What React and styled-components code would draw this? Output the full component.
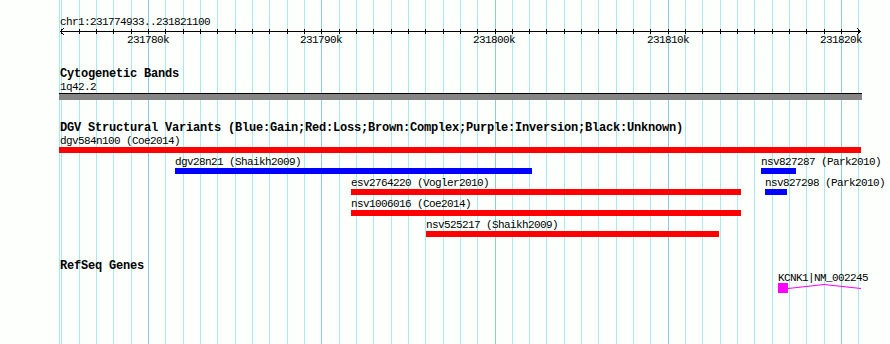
import React from 'react';
import styled, { createGlobalStyle } from 'styled-components';

const GlobalStyle = createGlobalStyle`
  html, body {
    margin: 0;
    padding: 0;
    background: #fcfffc;
  }
  #root {
    width: 890px;
    height: 344px;
  }
`;

// pixel scale of the view: 10k every 173.25px, 1k minor lines
const MAJOR_X = 148;
const STEP = 17.325;
const gridLines = [];
for (let k = -5; k <= 41; k++) {
  gridLines.push({ x: Math.round(MAJOR_X + k * STEP), major: k % 10 === 0 });
}

const tickLabels = [
  { x: 148, text: '231780k' },
  { x: 321, text: '231790k' },
  { x: 494, text: '231800k' },
  { x: 668, text: '231810k' },
  { x: 841, text: '231820k' },
];

const RED = '#ff0000';
const BLUE = '#0000ff';

const variantRows = [
  [{ name: 'dgv584n100 (Coe2014)', x: 59, x2: 861, labelX: 60, color: RED }],
  [
    { name: 'dgv28n21 (Shaikh2009)', x: 175, x2: 532, color: BLUE },
    { name: 'nsv827287 (Park2010)', x: 761, x2: 796, color: BLUE },
  ],
  [
    { name: 'esv2764220 (Vogler2010)', x: 351, x2: 741, color: RED },
    { name: 'nsv827298 (Park2010)', x: 765, x2: 787, color: BLUE },
  ],
  [{ name: 'nsv1006016 (Coe2014)', x: 351, x2: 741, color: RED }],
  [{ name: 'nsv525217 (Shaikh2009)', x: 426, x2: 719, color: RED }],
];

const Canvas = styled.div`
  position: relative;
  width: 890px;
  height: 344px;
  overflow: hidden;
  background: #fcfffc;
  font-family: "Liberation Mono", "DejaVu Sans Mono", monospace;
  color: #000;
`;

const GridLayer = styled.svg`
  position: absolute;
  left: 0;
  top: 0;
  pointer-events: none;
`;

const Content = styled.div`
  position: relative;
  display: flex;
  flex-direction: column;
`;

const SmallText = styled.div`
  font-size: 11px;
  line-height: 11px;
  height: 11px;
  letter-spacing: -0.6px;
  white-space: nowrap;
`;

const ChromLabel = styled(SmallText)`
  margin-top: 17px;
  padding-left: 60px;
`;

const Axis = styled.svg`
  display: block;
`;

const TickRow = styled.div`
  position: relative;
  height: 11px;
`;

const TickLabel = styled(SmallText)`
  position: absolute;
  top: 0;
  width: 42px;
  text-align: center;
`;

const Section = styled.section`
  display: flex;
  flex-direction: column;
  margin-top: ${p => p.$gap}px;
`;

const TrackTitle = styled.div`
  font-size: 12px;
  line-height: 13px;
  height: 13px;
  font-weight: 700;
  letter-spacing: -0.2px;
  padding-left: 60px;
  white-space: nowrap;
`;

const BandLabel = styled(SmallText)`
  margin-top: 1px;
  padding-left: 60px;
`;

const Band = styled.div`
  margin-left: 59px;
  width: 803px;
  height: 6px;
  border-top: 1px solid #000;
  background: #858585;
`;

const Rows = styled.div`
  margin-top: 1px;
  display: flex;
  flex-direction: column;
`;

const Row = styled.div`
  position: relative;
  height: 21px;
`;

const FeatureLabel = styled(SmallText)`
  position: absolute;
  top: 0;
`;

const Bar = styled.div`
  position: absolute;
  top: 11px;
  height: 6px;
  background: ${p => p.$color};
`;

const GeneRow = styled.div`
  position: relative;
  height: 24px;
`;

const Exon = styled.div`
  position: absolute;
  left: 778px;
  top: 10px;
  width: 10px;
  height: 10px;
  background: #ff00ff;
`;

const Intron = styled.svg`
  position: absolute;
  left: 788px;
  top: 10px;
`;

function Grid() {
  return (
    <GridLayer width="890" height="344" shapeRendering="crispEdges">
      <line x1="59.5" y1="0" x2="59.5" y2="344" stroke="#a9e9ef" />
      {gridLines.map(g => (
        <line
          key={g.x}
          x1={g.x + 0.5}
          y1="0"
          x2={g.x + 0.5}
          y2="344"
          stroke={g.major ? '#8ccbe8' : '#a9e9ef'}
        />
      ))}
    </GridLayer>
  );
}

function Ruler() {
  return (
    <>
      <ChromLabel>chr1:231774933..231821100</ChromLabel>
      <Axis width="890" height="7" shapeRendering="crispEdges">
        <line x1="60" y1="3.5" x2="861" y2="3.5" stroke="#000" />
        {gridLines.map(g => (
          <line key={g.x} x1={g.x + 0.5} y1="1" x2={g.x + 0.5} y2="6" stroke="#000" />
        ))}
        <polyline points="64,0 60.5,3.5 64,7" fill="none" stroke="#000" shapeRendering="auto" />
        <polyline points="857,0 860.5,3.5 857,7" fill="none" stroke="#000" shapeRendering="auto" />
      </Axis>
      <TickRow>
        {tickLabels.map(t => (
          <TickLabel key={t.text} style={{ left: t.x - 21 }}>{t.text}</TickLabel>
        ))}
      </TickRow>
    </>
  );
}

export default function App() {
  return (
    <Canvas>
      <GlobalStyle />
      <Grid />
      <Content>
        <Ruler />

        <Section $gap={22}>
          <TrackTitle>Cytogenetic Bands</TrackTitle>
          <BandLabel>1q42.2</BandLabel>
          <Band />
        </Section>

        <Section $gap={22}>
          <TrackTitle>DGV Structural Variants (Blue:Gain;Red:Loss;Brown:Complex;Purple:Inversion;Black:Unknown)</TrackTitle>
          <Rows>
            {variantRows.map((row, i) => (
              <Row key={i}>
                {row.map(f => (
                  <React.Fragment key={f.name}>
                    <FeatureLabel style={{ left: f.labelX ?? f.x }}>{f.name}</FeatureLabel>
                    <Bar $color={f.color} style={{ left: f.x, width: f.x2 - f.x }} />
                  </React.Fragment>
                ))}
              </Row>
            ))}
          </Rows>
        </Section>

        <Section $gap={19}>
          <TrackTitle>RefSeq Genes</TrackTitle>
          <GeneRow>
            <FeatureLabel style={{ left: 778 }}>KCNK1|NM_002245</FeatureLabel>
            <Exon />
            <Intron width="74" height="10">
              <polyline points="0,5.5 36,1.5 73,5.5" fill="none" stroke="#ff00ff" strokeWidth="1" />
            </Intron>
          </GeneRow>
        </Section>
      </Content>
    </Canvas>
  );
}
